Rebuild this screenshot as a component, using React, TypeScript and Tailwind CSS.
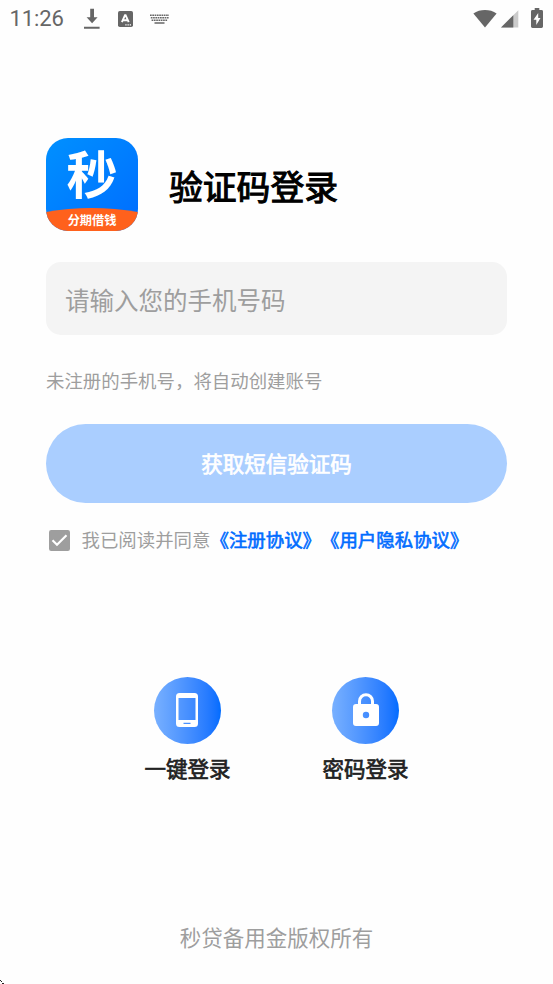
import React from "react";

function StatusBar() {
  return (
    <header className="flex h-[38px] items-center pl-[9.5px] text-[#666666]">
      <span className="w-[73.5px] font-[Roboto] text-[22px] leading-[38px] tracking-[-0.1px]">11:26</span>
      <svg className="h-[22px] w-[18px]" viewBox="0 0 18 22" fill="currentColor">
        <path d="M7.2 .8h3.8v8.4h3.6L9.1 15.2 3.6 9.2h3.6zM1 18.800h15.6v2H1z" />
      </svg>
      <svg className="ml-[17px] h-[16px] w-[15px]" viewBox="0 0 15 16">
        <rect width="15" height="16" rx="1.8" fill="currentColor" />
        <path d="M3.9 11.2 7 4.2h.6l3.1 7M5.2 9.300h4.2" fill="none" stroke="#fff" strokeWidth="1.9" />
        <path d="M7.3 13.200h1.3v1.2H7.300zM9.500 13.200h1.3v1.2H9.500zM11.700 13.200H13v1.2h-1.3z" fill="#fff" />
      </svg>
      <svg className="ml-[17px] h-[10px] w-[19px]" viewBox="0 0 19 10" fill="none" stroke="currentColor">
        <path d="M0 1.200h19M.8 3.700h18M1.600 6.200h16" strokeWidth="1.6" strokeDasharray="1.7 .6" />
        <path d="M4.500 9h10" strokeWidth="1.5" />
      </svg>
      <svg className="ml-auto h-[20px] w-[24px]" viewBox="0 0 24 20" fill="currentColor">
        <path d="M.4 4.500C7-.1 17-.1 23.600 4.500L12 18.600z" />
      </svg>
      <svg className="ml-[4px] h-[18px] w-[18px]" viewBox="0 0 18 18">
        <path d="M0 17.500 17.300.2V17.500z" fill="#cbcbcb" />
        <path d="M0 17.500 12.300 5.200V17.500z" fill="currentColor" />
      </svg>
      <svg className="-mt-[2px] ml-[12px] mr-[10px] h-[20px] w-[12px]" viewBox="0 0 12 20">
        <path d="M3.700 0h4.600v2h2.200Q12 2 12 3.400v15.200Q12 20 10.500 20h-9Q0 20 0 18.600V3.400Q0 2 1.500 2h2.200z" fill="currentColor" />
        <path d="M7.200 5 2.500 11.700h2.800V17l4.200-7H7.200z" fill="#fff" />
      </svg>
    </header>
  );
}

function AppLogo() {
  return (
    <div className="relative h-[92.5px] w-[92px] shrink-0 rounded-[22px] bg-linear-to-br from-[#0090ff] to-[#006cff] text-center font-bold text-white">
      <div className="flex h-[68px] items-center justify-center text-[51px] leading-[68px]">秒</div>
      <svg className="absolute bottom-0 left-0 h-[23px] w-[92px] rounded-b-[22px]" viewBox="0 0 92 23">
        <path d="M0 4Q45-4 92 4V23H0z" fill="#ff611c" />
      </svg>
      <div className="relative mt-[5px] whitespace-nowrap text-[12.2px] leading-[18px]">分期借钱</div>
    </div>
  );
}

function LoginOption({ label, children }: { label: string; children: React.ReactNode }) {
  return (
    <button className="flex w-[86px] flex-col items-center">
      <span className="mr-[0.5px] flex h-[67.5px] w-[67.5px] items-center justify-center rounded-full bg-linear-to-r from-[#78b0ff] to-[#006cff]">
        {children}
      </span>
      <span className="mt-[8px] whitespace-nowrap text-[21.5px] leading-[32px] text-[#222222] [-webkit-text-stroke:0.7px_#222222]">
        {label}
      </span>
    </button>
  );
}

export default function App() {
  return (
    <div className="relative flex h-[984px] w-full flex-col overflow-hidden bg-[#fefefe] font-['Noto_Sans_CJK_SC',sans-serif] text-[#9e9e9e]">
      <StatusBar />
      <main className="flex flex-col px-[46px] pt-[100px]">
        <div className="flex h-[92.5px] items-center">
          <AppLogo />
          <h1 className="ml-[31px] mt-[3px] text-[33.8px] leading-[50px] text-black [-webkit-text-stroke:1.1px_black]">验证码登录</h1>
        </div>
        <div className="mt-[31px] flex h-[73.5px] items-center rounded-[15px] bg-[#f4f4f4] pl-[19px] pt-[4px] text-[24.5px]">
          请输入您的手机号码
        </div>
        <p className="mt-[31px] text-[18.43px] leading-[28px]">未注册的手机号，将自动创建账号</p>
        <button className="mt-[30px] h-[79px] rounded-full bg-[#aaceff] text-[21.5px] text-white [-webkit-text-stroke:0.7px_white]">
          获取短信验证码
        </button>
        <div className="mt-[23px] flex h-[28px] items-center whitespace-nowrap text-[18.43px] [text-spacing-trim:space-all]">
          <svg className="ml-[3px] mr-[11.5px] h-[21px] w-[21px] shrink-0" viewBox="0 0 21 21">
            <rect width="21" height="21" rx="2.2" fill="#9e9e9e" />
            <path d="M3.500 10.300 8 14.800 17.500 5.300" fill="none" stroke="#fff" strokeWidth="2.2" />
          </svg>
          <span>我已阅读并同意</span>
          <span className="text-[#006cff] [-webkit-text-stroke:0.6px_#006cff]">《注册协议》</span>
          <span className="text-[#006cff] [-webkit-text-stroke:0.6px_#006cff]">《用户隐私协议》</span>
        </div>
      </main>
      <section className="mt-[122.5px] flex justify-center gap-[92px]">
        <LoginOption label="一键登录">
          <svg className="h-[34px] w-[22px]" viewBox="0 0 22 34">
            <path fillRule="evenodd" d="M3.500 0h15Q22 0 22 3.500v27Q22 34 18.500 34h-15Q0 34 0 30.500v-27Q0 0 3.500 0zM2.500 5v22h17V5zM7.500 29.700v1.300h7v-1.300z" fill="#fff" />
          </svg>
        </LoginOption>
        <LoginOption label="密码登录">
          <svg className="ml-px h-[34px] w-[26px]" viewBox="0 0 26 34">
            <path d="M6.500 13V8.200a6.500 6.500 0 0 1 13 0V13" fill="none" stroke="#fff" strokeWidth="3" />
            <path fillRule="evenodd" d="M3 11h20q3 0 3 3V30q0 3-3 3H3q-3 0-3-3V14q0-3 3-3zM13 18.800a3.200 3.200 0 1 0 0 6.400 3.200 3.200 0 0 0 0-6.400z" fill="#fff" />
          </svg>
        </LoginOption>
      </section>
      <footer className="mb-[31px] mt-auto text-center text-[21.5px] leading-[32px]">秒贷备用金版权所有</footer>
      <svg className="absolute bottom-0 left-0 h-[4px] w-[4px]" viewBox="0 0 4 4">
        <path d="M0 0h1v1H0zM1 1h1v1H1zM2 3h2v1H2z" fill="#222" />
      </svg>
    </div>
  );
}
